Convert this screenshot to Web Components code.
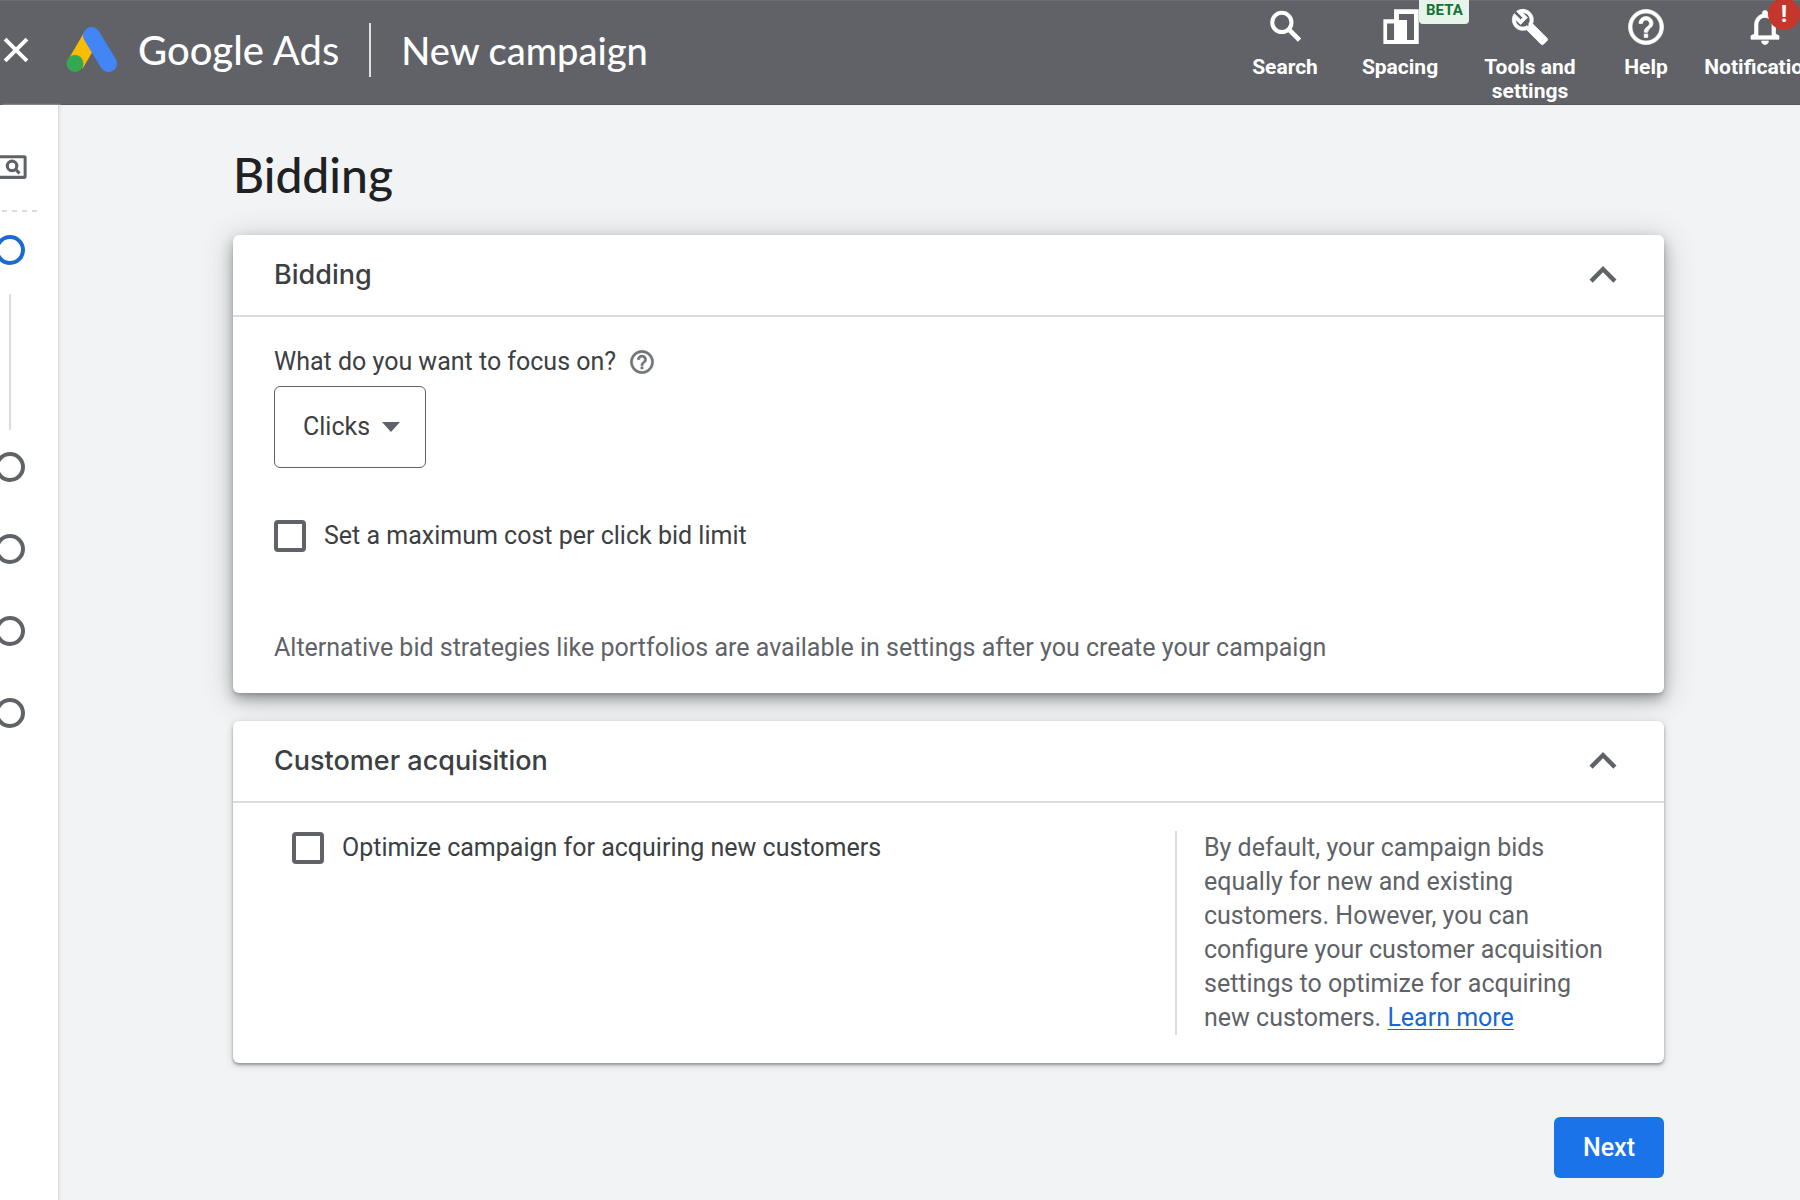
<!DOCTYPE html>
<html lang="en">
<head>
<meta charset="utf-8">
<title>New campaign - Google Ads</title>
<style>
  html, body { margin: 0; height: 100%; }
  body {
    --ink: #202124; --text: #3c4043; --muted: #5f6368; --line: #dadce0;
    --blue: #1a73e8; --canvas: #f1f3f4;
    font: 400 25px/34px Roboto, "Liberation Sans", sans-serif;
    color: var(--text);
    background: var(--canvas);
  }
</style>
</head>
<body>
<ads-app></ads-app>

<template id="t-app">
  <style>
    :host { display: flex; flex-direction: column; min-height: 100vh; }
    .body { flex: 1; display: flex; }
    main { flex: 1; min-width: 0; padding: 40px 136px 22px 174px; }
    h1 { margin: 0 0 30px; font: 500 48px/60px Lato, sans-serif; color: var(--ink); }
    .stack { display: flex; flex-direction: column; gap: 28px; }
    .field { display: flex; align-items: center; gap: 12px; margin-bottom: 7px; }
    .field button { display: flex; padding: 0; border: 0; background: none; color: #70757a; }
    .limit { margin: 51px 0 78px; }
    .note { margin: 0; color: var(--muted); }
    .split { display: flex; justify-content: space-between; }
    .split ads-check { margin-left: 18px; align-self: flex-start; }
    .info { box-sizing: border-box; width: 448px; padding: 0 12px 0 27px; border-left: 2px solid var(--line); color: var(--muted); }
    .info p { margin: 0; }
    .info a { color: #1967d2; text-decoration-thickness: 1px; text-underline-offset: 3px; }
    .actions { display: flex; justify-content: flex-end; margin-top: 54px; }
    .next { padding: 14px 29px; border: 0; border-radius: 6px; background: var(--blue); color: #fff; font: 500 25px/33px Roboto, sans-serif; }
  </style>
  <ads-header></ads-header>
  <div class="body">
    <ads-stepper></ads-stepper>
    <main>
      <h1>Bidding</h1>
      <div class="stack">
        <ads-card heading="Bidding" raised>
          <div class="field">
            <span>What do you want to focus on?</span>
            <button type="button" aria-label="About bidding focus"><ads-icon name="help" size="28"></ads-icon></button>
          </div>
          <ads-select></ads-select>
          <ads-check class="limit">Set a maximum cost per click bid limit</ads-check>
          <p class="note">Alternative bid strategies like portfolios are available in settings after you create your campaign</p>
        </ads-card>
        <ads-card heading="Customer acquisition">
          <div class="split">
            <ads-check>Optimize campaign for acquiring new customers</ads-check>
            <div class="info"><p>By default, your campaign bids equally for new and existing customers. However, you can configure your customer acquisition settings to optimize for acquiring new customers. <a href="#learn">Learn more</a></p></div>
          </div>
        </ads-card>
      </div>
      <div class="actions"><button class="next" type="button">Next</button></div>
    </main>
  </div>
</template>

<template id="t-header">
  <style>
    :host { display: flex; box-sizing: border-box; height: 105px; overflow: hidden; background: #606267; color: #fff; border-bottom: 1px solid #55575b; box-shadow: inset 0 1px #6c6e73; }
    .brand { display: flex; align-items: center; padding-bottom: 4px; }
    .close { display: flex; padding: 0; border: 0; background: none; color: inherit; margin: 0 32px 0 -2px; }
    .logo { width: 52px; height: 48px; margin-right: 20px; }
    .name { font: 400 40px/50px Lato, sans-serif; white-space: pre; }
    .name b { font-weight: 500; }
    .title { font: 500 38px/54px Lato, sans-serif; margin-left: 30px; padding-left: 30px; border-left: 2px solid #dfe0e2; white-space: nowrap; }
    nav { margin-left: auto; margin-right: -38px; display: grid; grid-template-columns: 110px 120px 140px 92px 146px; align-items: start; }
  </style>
  <div class="brand">
    <button class="close" type="button" aria-label="Close"><ads-icon name="close" size="36"></ads-icon></button>
    <svg class="logo" viewBox="0 0 52 48" aria-hidden="true">
      <path d="M25.500 10.500 9.500 38" stroke="#fbbc04" stroke-width="17" fill="none"/>
      <path d="M25.500 9.500 42.500 37.500" stroke="#4285f4" stroke-width="17" stroke-linecap="round" fill="none"/>
      <circle cx="9" cy="37.500" r="8.500" fill="#34a853"/>
    </svg>
    <span class="name"><b>Google</b> Ads</span>
    <span class="title">New campaign</span>
  </div>
  <nav aria-label="Tools">
    <ads-tool icon="search">Search</ads-tool>
    <ads-tool icon="spacing" badge="BETA">Spacing</ads-tool>
    <ads-tool icon="wrench">Tools and<br>settings</ads-tool>
    <ads-tool icon="help">Help</ads-tool>
    <ads-tool icon="bell" alert="!">Notifications</ads-tool>
  </nav>
</template>

<template id="t-tool">
  <style>
    :host { display: flex; justify-content: center; }
    button { position: relative; display: flex; flex-direction: column; align-items: center; gap: 7px; padding: 6px 0 0; border: 0; background: none; color: #fff; font: 700 21px/24px Roboto, sans-serif; white-space: nowrap; }
    .badge { position: absolute; left: calc(50% + 19px); top: -8px; padding: 8px 6px 0 7px; height: 24px; border-radius: 4px; background: #e6f4ea; color: #137333; font: 700 15px/20px Roboto, sans-serif; }
    .alert { position: absolute; left: calc(50% + 3px); top: -2px; width: 32px; height: 32px; border-radius: 50%; background: #c5372c; font: 700 24px/32px Roboto, sans-serif; }
  </style>
  <button type="button"><ads-icon size="42"></ads-icon><span><slot></slot></span></button>
</template>

<template id="t-stepper">
  <style>
    :host { display: block; box-sizing: border-box; width: 59px; overflow: hidden; background: #fff; border-right: 1px solid var(--line); box-shadow: 2px 0 2px #e8eaed; }
    nav { display: flex; flex-direction: column; align-items: center; width: 60px; margin-left: -20px; padding-top: 43px; color: #5f6368; }
    button { display: flex; padding: 0; border: 0; background: none; color: inherit; }
    .dash { width: 56px; height: 2px; margin: 24px 0 23px; background: repeating-linear-gradient(90deg, var(--line) 0 5px, transparent 5px 10px); }
    .step { box-sizing: border-box; width: 30px; height: 30px; border: 4px solid #5f6368; border-radius: 50%; margin-bottom: 52px; }
    .step.current { border-color: #1b6ad0; margin-bottom: 29px; }
    .rail { width: 2px; height: 136px; margin-bottom: 22px; background: var(--line); }
  </style>
  <nav aria-label="Campaign steps">
    <button type="button" aria-label="Search campaign"><ads-icon name="campaign" size="38"></ads-icon></button>
    <div class="dash"></div>
    <button class="step current" type="button" aria-label="Bidding"></button>
    <div class="rail"></div>
    <button class="step" type="button" aria-label="Campaign settings"></button>
    <button class="step" type="button" aria-label="Ads"></button>
    <button class="step" type="button" aria-label="Budget"></button>
    <button class="step" type="button" aria-label="Review"></button>
  </nav>
</template>

<template id="t-card">
  <style>
    :host { display: block; position: relative; border-radius: 6px; background: #fff; box-shadow: 0 2px 3px rgba(60,64,67,.45), 0 2px 8px rgba(60,64,67,.2); }
    :host([raised]) { box-shadow: 0 2px 3px rgba(50,55,55,.15), 0 6px 12px rgba(50,55,55,.35), 0 5px 30px rgba(60,64,67,.3); }
    header { display: flex; align-items: center; justify-content: space-between; height: 80px; padding: 0 34px 0 41px; border-bottom: 2px solid var(--line); }
    h2 { margin: 0; font: 500 27px/34px Inter, sans-serif; }
    button { display: flex; padding: 0; border: 0; background: none; color: #5f6368; }
    .content { padding: 28px 41px; }
  </style>
  <header><h2></h2><button type="button" aria-label="Collapse"><ads-icon name="up" size="54"></ads-icon></button></header>
  <div class="content"><slot></slot></div>
</template>

<template id="t-select">
  <style>
    :host { display: flex; align-items: center; position: relative; width: 152px; }
    select { appearance: none; box-sizing: border-box; width: 152px; height: 82px; padding: 0 56px 0 28px; border: 1px solid #5f6368; border-radius: 6px; background: #fff; color: inherit; font: inherit; }
    svg { position: absolute; right: 26px; width: 18px; height: 10px; pointer-events: none; }
  </style>
  <select aria-label="What do you want to focus on?"><option>Clicks</option><option>Conversions</option></select>
  <svg viewBox="0 0 18 10" aria-hidden="true"><path d="M0 0h18L9 10z" fill="#5f6368"/></svg>
</template>

<template id="t-check">
  <style>
    :host { display: block; }
    label { display: flex; align-items: center; gap: 18px; }
    input { appearance: none; box-sizing: border-box; flex: none; width: 32px; height: 32px; margin: 0; border: 4px solid #5f6368; border-radius: 4px; background: #fff; }
    input:checked { background: var(--blue); border-color: var(--blue); }
  </style>
  <label><input type="checkbox"><span><slot></slot></span></label>
</template>

<script>
const ICONS = {
  close: '<path d="M4.700 4.700 19.300 19.300M19.300 4.700 4.700 19.300" stroke="currentColor" stroke-width="2.600"/>',
  search: '<circle cx="10.200" cy="9.400" r="5.500" fill="none" stroke="currentColor" stroke-width="2.300"/><path d="m14 13.200 6.300 6.300" stroke="currentColor" stroke-width="2.700"/>',
  spacing: '<path fill-rule="evenodd" d="M8.600 1.900h14.100v19.800H2.500V7.600h6.100zM11.400 4.600V8H16v11.400h4V4.600zM4.600 10h4v9.400h-4z"/>',
  wrench: '<g transform="translate(1 1) scale(.92)" stroke="currentColor" stroke-width=".5"><path d="M22.610 18.990l-9.080-9.080c.93-2.340.45-5.100-1.440-7C9.790.61 6.210.4 3.660 2.260L7.500 6.110 6.080 7.520 2.250 3.690C.39 6.230.6 9.820 2.900 12.110c1.860 1.860 4.570 2.350 6.890 1.480l9.110 9.110c.39.39 1.020.39 1.410 0l2.300-2.300c.4-.38.4-1.010 0-1.410zm-3 1.600l-9.460-9.460c-.61.45-1.290.72-2 .82-1.360.2-2.790-.21-3.830-1.250C3.370 9.760 2.930 8.500 3 7.260l3.090 3.090 4.240-4.240-3.090-3.090c1.240-.07 2.490.37 3.440 1.310 1.080 1.080 1.490 2.570 1.240 3.960-.12.71-.42 1.370-.88 1.960l9.450 9.450-.88.890z"/><path d="m11 11 9 9" stroke-width="3.500"/></g>',
  help: '<path stroke="currentColor" stroke-width=".4" d="M11 18h2v-2h-2v2zm1-16C6.480 2 2 6.480 2 12s4.480 10 10 10 10-4.480 10-10S17.520 2 12 2zm0 18c-4.410 0-8-3.590-8-8s3.590-8 8-8 8 3.590 8 8-3.590 8-8 8zm0-14c-2.210 0-4 1.790-4 4h2c0-1.100.9-2 2-2s2 .9 2 2c0 2-3 1.750-3 5h2c0-2.250 3-2.500 3-5 0-2.210-1.790-4-4-4z"/>',
  bell: '<path stroke="currentColor" stroke-width=".4" d="M12 22c1.100 0 2-.9 2-2h-4c0 1.100.9 2 2 2zm6-6v-5c0-3.070-1.630-5.640-4.500-6.320V4c0-.83-.67-1.500-1.500-1.500s-1.500.67-1.500 1.500v.68C7.640 5.360 6 7.920 6 11v5l-2 1v2h16v-2zm-2 1H8v-6c0-2.480 1.510-4.500 4-4.500s4 2.020 4 4.500z"/>',
  up: '<path d="m12 8-6 6 1.410 1.410L12 10.830l4.590 4.580L18 14z"/>',
  campaign: '<path fill-rule="evenodd" d="M21 4.500H3c-1 0-1.500.6-1.500 1.500v12c0 1 .6 1.500 1.500 1.500h18c1 0 1.500-.6 1.500-1.500V6c0-1-.6-1.500-1.500-1.500zM20.600 17.600H3V6.400h17.600z"/><circle cx="13.300" cy="11.300" r="3" fill="none" stroke="currentColor" stroke-width="2"/><path d="m15.400 13.400 2.600 2.600" stroke="currentColor" stroke-width="2"/>'
};

class Base extends HTMLElement {
  constructor() {
    super();
    const root = this.attachShadow({ mode: 'open' });
    const id = this.constructor.template;
    if (id) root.append(document.getElementById(id).content.cloneNode(true));
  }
}
customElements.define('ads-icon', class extends Base {
  static observedAttributes = ['name'];
  attributeChangedCallback() { this.draw(); }
  connectedCallback() { this.draw(); }
  draw() {
    const s = this.getAttribute('size') || 24;
    this.shadowRoot.innerHTML = `<style>:host{display:block}svg{display:block;fill:currentColor}</style><svg width="${s}" height="${s}" viewBox="0 0 24 24" aria-hidden="true">${ICONS[this.getAttribute('name')] || ''}</svg>`;
  }
});
customElements.define('ads-tool', class extends Base {
  static template = 't-tool';
  connectedCallback() {
    this.shadowRoot.querySelector('ads-icon').setAttribute('name', this.getAttribute('icon'));
    for (const kind of ['badge', 'alert']) {
      if (!this.hasAttribute(kind)) continue;
      const mark = document.createElement('span');
      mark.className = kind;
      mark.textContent = this.getAttribute(kind);
      this.shadowRoot.querySelector('button').append(mark);
    }
  }
});
customElements.define('ads-card', class extends Base {
  static template = 't-card';
  connectedCallback() { this.shadowRoot.querySelector('h2').textContent = this.getAttribute('heading'); }
});
customElements.define('ads-select', class extends Base { static template = 't-select'; });
customElements.define('ads-check', class extends Base { static template = 't-check'; });
customElements.define('ads-stepper', class extends Base { static template = 't-stepper'; });
customElements.define('ads-header', class extends Base { static template = 't-header'; });
customElements.define('ads-app', class extends Base { static template = 't-app'; });
</script>
</body>
</html>
